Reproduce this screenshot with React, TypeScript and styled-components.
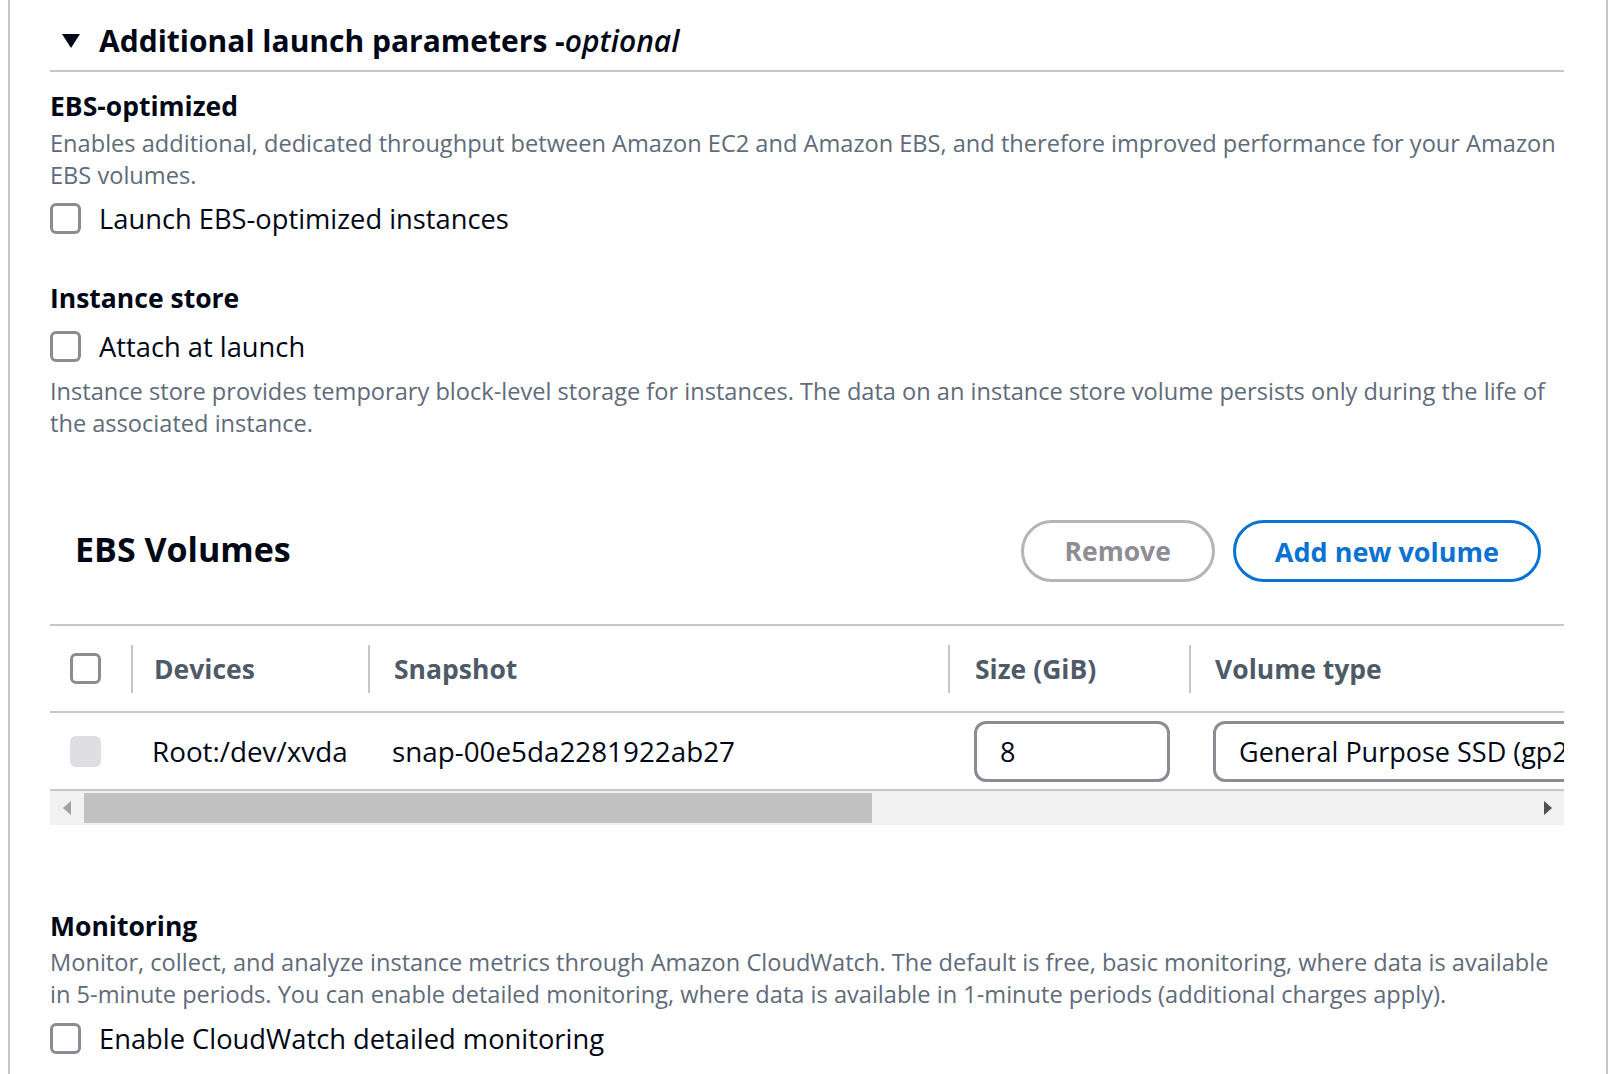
import React from "react";
import styled, { createGlobalStyle } from "styled-components";

const Global = createGlobalStyle`
  html, body { margin: 0; padding: 0; background: #ffffff; }
  body { font-family: "Open Sans", "Noto Sans", sans-serif; color: #000716; }
  * { box-sizing: border-box; }
`;

const Panel = styled.div`
  margin-left: 8px;
  width: 1600px;
  min-height: 1074px;
  border-left: 2px solid #c6c6cd;
  border-right: 2px solid #c6c6cd;
  padding: 0 42px 0 40px;
`;

const Header = styled.div`
  display: flex;
  align-items: center;
  gap: 19px;
  padding: 24px 0 12px 12px;
  border-bottom: 2px solid #c6c6cd;
`;

const Caret = styled.svg`
  width: 18px;
  height: 14px;
  flex: none;
`;

const HeaderTitle = styled.h2`
  margin: 0;
  font-size: 30px;
  line-height: 34px;
  font-weight: 700;
  color: #000716;
  white-space: nowrap;
  em { font-weight: 600; font-style: italic; }
`;

const Section = styled.section<{ $top: number }>`
  margin-top: ${(p) => p.$top}px;
  display: flex;
  flex-direction: column;
`;

const Label = styled.div`
  font-size: 26.5px;
  line-height: 30px;
  font-weight: 700;
  color: #000716;
`;

const Desc = styled.p<{ $top: number }>`
  margin: ${(p) => p.$top}px 0 0 0;
  font-size: 23.6px;
  line-height: 32px;
  color: #5f6b7a;
`;

const CheckRow = styled.label<{ $top: number }>`
  margin-top: ${(p) => p.$top}px;
  display: flex;
  align-items: center;
  gap: 18px;
  height: 34px;
  font-size: 27.3px;
  color: #000716;
  white-space: nowrap;
`;

const Box = styled.span<{ $disabled?: boolean }>`
  width: 31px;
  height: 31px;
  flex: none;
  border-radius: 6px;
  border: ${(p) => (p.$disabled ? "none" : "3px solid #8c8c94")};
  background: ${(p) => (p.$disabled ? "#dedee3" : "#ffffff")};
`;

const Toolbar = styled.div`
  margin-top: 81px;
  display: flex;
  align-items: center;
  justify-content: space-between;
  padding: 0 23px 0 25px;
  height: 62px;
`;

const BigTitle = styled.h2`
  margin: 0;
  font-size: 34px;
  line-height: 40px;
  font-weight: 700;
  color: #000716;
  position: relative;
  top: -2px;
`;

const Actions = styled.div`
  display: flex;
  gap: 18px;
`;

const Pill = styled.button<{ $primary?: boolean }>`
  height: 62px;
  padding: 0 ${(p) => (p.$primary ? 39 : 41)}px;
  border-radius: 31px;
  background: #ffffff;
  border: 3px solid ${(p) => (p.$primary ? "#0972d3" : "#b4b4bb")};
  color: ${(p) => (p.$primary ? "#0972d3" : "#8d8d94")};
  font-family: "Open Sans", sans-serif;
  font-size: ${(p) => (p.$primary ? 27 : 26.5)}px;
  font-weight: 700;
  line-height: 1;
  white-space: nowrap;
`;

const TableWrap = styled.div`
  margin-top: 42px;
  border-top: 2px solid #c6c6cd;
  overflow: hidden;
`;

const Grid = styled.div`
  display: grid;
  grid-template-columns: 81px 237px 580px 241px 560px;
  width: max-content;
`;

const HeadRow = styled(Grid)`
  height: 87px;
  align-items: center;
  border-bottom: 2px solid #c6c6cd;
`;

const HeadCell = styled.div<{ $pad: number; $sep?: boolean }>`
  height: 48px;
  display: flex;
  align-items: center;
  padding-left: ${(p) => p.$pad}px;
  border-left: ${(p) => (p.$sep ? "2px solid #c6c6cd" : "none")};
  font-size: 26.5px;
  font-weight: 700;
  color: #4f5a68;
  white-space: nowrap;
`;

const BodyRow = styled(Grid)`
  height: 78px;
  align-items: center;
  border-bottom: 2px solid #c6c6cd;
`;

const Cell = styled.div<{ $pad: number }>`
  padding-left: ${(p) => p.$pad}px;
  display: flex;
  align-items: center;
  font-size: 27.8px;
  color: #000716;
  white-space: nowrap;
`;

const Field = styled.div<{ $w: number }>`
  width: ${(p) => p.$w}px;
  height: 61px;
  border: 3px solid #8c8c94;
  border-radius: 12px;
  display: flex;
  align-items: center;
  padding-left: 23px;
  font-size: 27px;
  color: #000716;
  white-space: nowrap;
  overflow: hidden;
`;

const ScrollBar = styled.div`
  height: 34px;
  background: #f1f1f1;
  display: flex;
  align-items: center;
  padding: 0 12px 0 13px;
`;

const Thumb = styled.div`
  height: 30px;
  background: #c1c1c1;
  margin-left: 13px;
`;

const Spacer = styled.div`
  flex: 1;
`;

const Arrow = styled.svg`
  width: 8px;
  height: 14px;
  flex: none;
`;

export default function App() {
  return (
    <>
      <Global />
      <Panel>
        <Header>
          <Caret viewBox="0 0 18 14">
            <polygon points="0,0 18,0 9,14" fill="#000716" />
          </Caret>
          <HeaderTitle>
            Additional launch parameters -<em>optional</em>
          </HeaderTitle>
        </Header>

        <Section $top={19}>
          <Label>EBS-optimized</Label>
          <Desc $top={6}>
            Enables additional, dedicated throughput between Amazon EC2 and Amazon EBS, and therefore improved
            performance for your Amazon EBS volumes.
          </Desc>
          <CheckRow $top={10}>
            <Box />
            Launch EBS-optimized instances
          </CheckRow>
        </Section>

        <Section $top={48}>
          <Label>Instance store</Label>
          <CheckRow $top={16}>
            <Box />
            Attach at launch
          </CheckRow>
          <Desc $top={12}>
            Instance store provides temporary block-level storage for instances. The data on an instance store volume
            persists only during the life of the associated instance.
          </Desc>
        </Section>

        <Toolbar>
          <BigTitle>EBS Volumes</BigTitle>
          <Actions>
            <Pill>Remove</Pill>
            <Pill $primary>Add new volume</Pill>
          </Actions>
        </Toolbar>

        <TableWrap>
          <HeadRow>
            <HeadCell $pad={20}>
              <Box />
            </HeadCell>
            <HeadCell $pad={21} $sep>Devices</HeadCell>
            <HeadCell $pad={24} $sep>Snapshot</HeadCell>
            <HeadCell $pad={25} $sep>Size (GiB)</HeadCell>
            <HeadCell $pad={24} $sep>Volume type</HeadCell>
          </HeadRow>
          <BodyRow>
            <Cell $pad={20}>
              <Box $disabled />
            </Cell>
            <Cell $pad={21}>Root:/dev/xvda</Cell>
            <Cell $pad={24}>snap-00e5da2281922ab27</Cell>
            <Cell $pad={26}>
              <Field $w={196}>8</Field>
            </Cell>
            <Cell $pad={24}>
              <Field $w={520}>General Purpose SSD (gp2)</Field>
            </Cell>
          </BodyRow>
          <ScrollBar>
            <Arrow viewBox="0 0 8 14">
              <polygon points="8,0 8,14 0,7" fill="#a3a3a3" />
            </Arrow>
            <Thumb style={{ width: 788 }} />
            <Spacer />
            <Arrow viewBox="0 0 8 14">
              <polygon points="0,0 0,14 8,7" fill="#505050" />
            </Arrow>
          </ScrollBar>
        </TableWrap>

        <Section $top={86}>
          <Label>Monitoring</Label>
          <Desc $top={5}>
            Monitor, collect, and analyze instance metrics through Amazon CloudWatch. The default is free, basic
            monitoring, where data is available in 5-minute periods. You can enable detailed monitoring, where data is
            available in 1-minute periods (additional charges apply).
          </Desc>
          <CheckRow $top={11}>
            <Box />
            Enable CloudWatch detailed monitoring
          </CheckRow>
        </Section>
      </Panel>
    </>
  );
}
